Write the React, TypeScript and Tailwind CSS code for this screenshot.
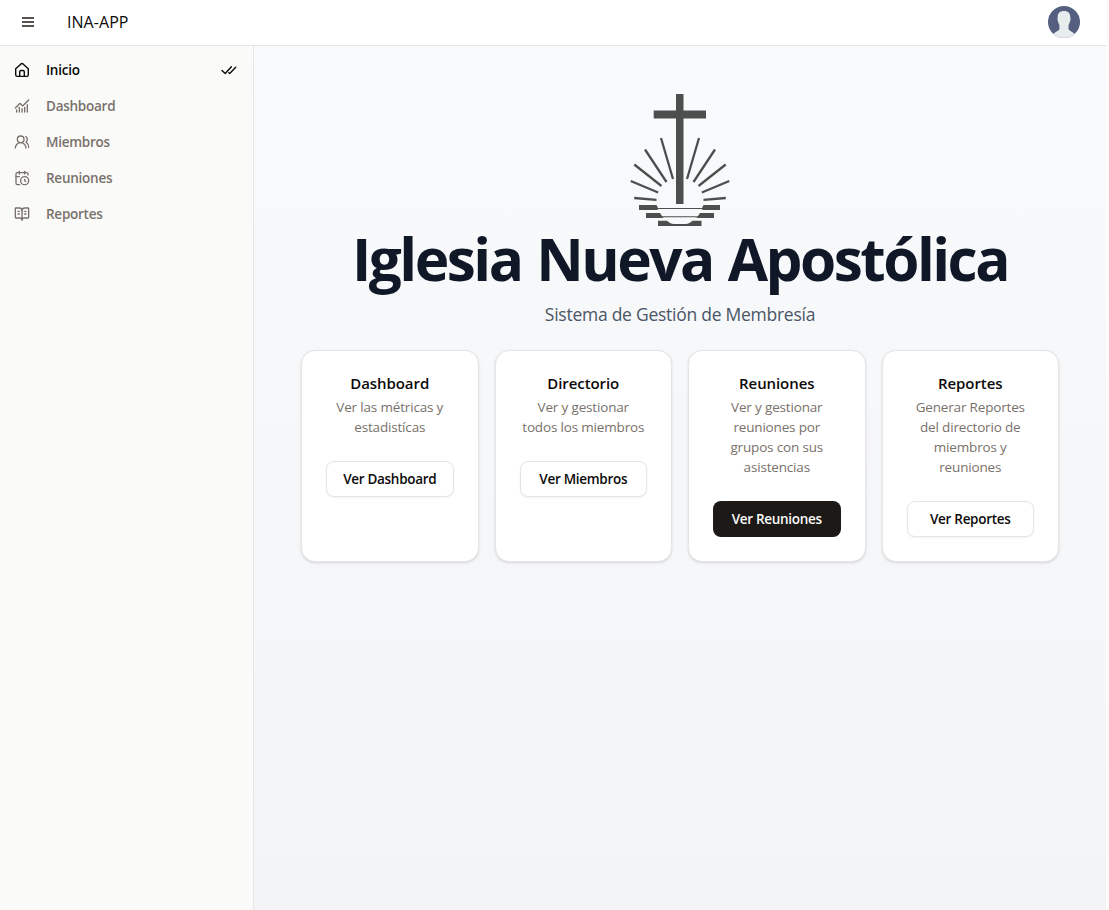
import type { ReactNode } from "react";
import { ChartNoAxesCombined, UsersRound, CalendarClock, BookOpenText } from "lucide-react";

function HomeIcon() {
  return (
    <svg viewBox="0 0 16 16" className="size-4" fill="none" stroke="currentColor" strokeWidth="1.4" strokeLinecap="round" strokeLinejoin="round">
      <path d="M1.700 6.700 7 1.900q1-.8 2 0l5.300 4.800v6.100c0 1-.6 1.600-1.600 1.600H3.300c-1 0-1.600-.6-1.600-1.600z" />
      <path d="M5.700 14.400V9.800q0-1.300 1.300-1.300h2q1.300 0 1.300 1.300v4.600" />
    </svg>
  );
}

function DoubleCheck() {
  return (
    <svg viewBox="0 0 16 16" className="size-4" fill="none" stroke="currentColor" strokeWidth="1.400" strokeLinecap="round" strokeLinejoin="round">
      <path d="M1 8.500l3.200 3L10.400 4.800M7.800 10.800l.9.700 6-6.200" />
    </svg>
  );
}

function Emblem() {
  return (
    <svg width="120" height="136" viewBox="0 0 120 136" fill="#4d4f4f" className="block">
      <path d="M56 0h7.500v110H56zM33.700 16.500h52.300v8H33.700z" />
      <g stroke="#4d4f4f" strokeWidth="2.300">
        <path d="M41 44l12 41" />
        <path d="M25 55.500l21.500 32.500M14.300 70.500l27.200 21.500M10.700 87l27.500 11.500M14.200 104l22.300 1.800" />
        <path d="M79 44L67 85M95 55.500L73.500 88M105.700 70.500L78.500 92M109.300 87L81.800 98.500M105.800 104l-22.300 1.800" />
      </g>
      <path d="M19 111h17.500l1.500 3h44l1.500-3H100v5H82.500l-.5-1H38l-.5 1H19z" />
      <path d="M26 119h14l2.200 3.300h35.600L80 119h14v5H77l-.5-.7h-33l-.5.7H26z" />
      <path d="M38 126.800h9c2 1.800 4 3.300 7 3.300h11.500c3 0 5-1.500 7-3.300h9v5.200H38z" />
    </svg>
  );
}

const nav: { label: string; icon: ReactNode }[] = [
  { label: "Inicio", icon: <HomeIcon /> },
  { label: "Dashboard", icon: <ChartNoAxesCombined size={16} /> },
  { label: "Miembros", icon: <UsersRound size={16} /> },
  { label: "Reuniones", icon: <CalendarClock size={16} /> },
  { label: "Reportes", icon: <BookOpenText size={16} /> },
];

const cards = [
  { title: "Dashboard", lines: ["Ver las métricas y", "estadistícas"], button: "Ver Dashboard" },
  { title: "Directorio", lines: ["Ver y gestionar", "todos los miembros"], button: "Ver Miembros" },
  { title: "Reuniones", lines: ["Ver y gestionar", "reuniones por", "grupos con sus", "asistencias"], button: "Ver Reuniones", primary: true },
  { title: "Reportes", lines: ["Generar Reportes", "del directorio de", "miembros y", "reuniones"], button: "Ver Reportes" },
];

export default function App() {
  return (
    <div className="flex h-[910px] w-[1109px] flex-col overflow-hidden bg-[#fcfcfc] pr-[3px] font-['Open_Sans','Noto_Sans',sans-serif] text-[#0c0a09]">
      <header className="flex h-[46px] shrink-0 items-center border-b border-[#e5e5e5] bg-white pr-[26px] pl-5">
        <svg className="-mt-px" width="16" height="16" viewBox="0 0 16 16" fill="#57534e"><path d="M2 3h12v2H2zM2 7h12v2H2zM2 11h12v2H2z" /></svg>
        <span className="-mt-px ml-[31px] text-base tracking-[0.05px]">INA-APP</span>
        <svg className="-mt-0.5 ml-auto" width="32" height="32" viewBox="0 0 32 32">
          <clipPath id="avatar"><circle cx="16" cy="16" r="16" /></clipPath>
          <g clipPath="url(#avatar)">
            <path d="M0 0h32v32H0z" fill="#556080" />
            <path d="M16 5c4.200 0 6.500 2.400 6.200 6 .3 1 .5 2 .1 3.500-.5 1-.6 2.500-1.600 4l-.2 4.500c.5 2 4.500 2.500 6.500 5.500V34H5v-5.500C7 25.500 11 25 11.500 23l-.2-4.500c-1-1.500-1.100-3-1.600-4-.4-1.500-.2-2.500.1-3.500C9.500 7.400 11.800 5 16 5z" fill="#e7eced" />
          </g>
        </svg>
      </header>
      <div className="flex min-h-0 flex-1">
        <aside className="w-[254px] shrink-0 border-r border-[#e5e5e5] bg-[#fafaf9] pt-1.5">
          {nav.map((item, i) => (
            <div key={item.label} className={`flex h-9 items-center pr-4 pl-3.5 text-sm font-semibold ${i === 0 ? "text-[#0c0a09]" : "text-[#79716b]"}`}>
              {item.icon}
              <span className="ml-4 pt-0.5 text-[13.500px] tracking-[-0.250px]">{item.label}</span>
              {i === 0 && <span className="ml-auto"><DoubleCheck /></span>}
            </div>
          ))}
        </aside>
        <main className="flex min-w-0 flex-1 flex-col items-center bg-linear-to-b from-[#f9fafc] to-[#f3f4f6] px-[47px] pt-12">
          <Emblem />
          <h1 className="-mt-0.5 text-[58.500px] leading-[60px] font-bold tracking-[-2.500px] [word-spacing:2px] whitespace-nowrap text-[#101828]">Iglesia Nueva Apostólica</h1>
          <p className="mt-3 text-[17.500px] leading-7 tracking-[-0.260px] text-[#4a5565]">Sistema de Gestión de Membresía</p>
          <div className="mt-[22px] grid h-[212px] w-full grid-cols-4 gap-4">
            {cards.map((card) => (
              <section key={card.title} className="rounded-[14px] border border-[#e5e5e5] bg-white px-6 pt-6 text-center shadow-sm">
                <h2 className="text-[15px] leading-4 font-semibold tracking-[-0.080px]">{card.title}</h2>
                <div className="mt-1.5 text-[13.500px] leading-5 tracking-[-0.170px] whitespace-nowrap text-[#79716b]">
                  {card.lines.map((line) => <div key={line}>{line}</div>)}
                </div>
                <button className={`mt-6 h-9 w-full rounded-lg text-[13.500px] font-semibold tracking-[-0.300px] whitespace-nowrap ${card.primary ? "bg-[#1c1917] text-[#fafaf9]" : "border border-[#e5e5e5] bg-white shadow-xs"}`}>{card.button}</button>
              </section>
            ))}
          </div>
        </main>
      </div>
    </div>
  );
}
